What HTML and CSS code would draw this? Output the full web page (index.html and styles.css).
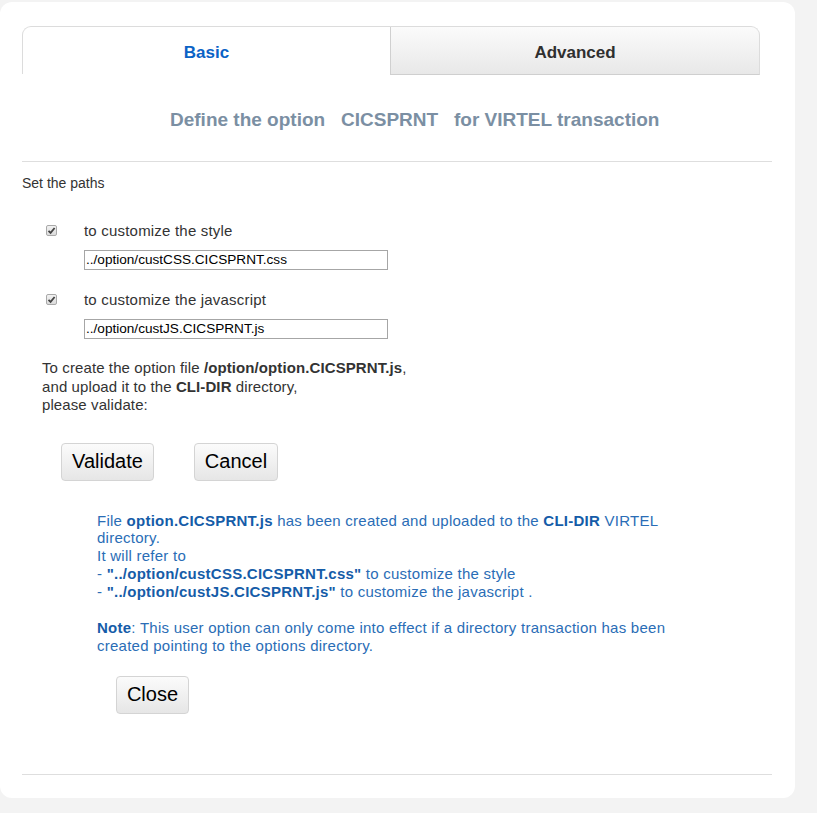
FILE: index.html
```html
<!DOCTYPE html>
<html>
<head>
<meta charset="utf-8">
<link rel="stylesheet" href="styles.css">
</head>
<body>
<div class="panel">
  <div class="tabs">
    <div class="tab tab-basic">Basic</div>
    <div class="tab tab-adv">Advanced</div>
  </div>
  <div class="title">Define the option&nbsp;&nbsp; CICSPRNT&nbsp;&nbsp; for VIRTEL transaction</div>
  <div class="rule rule-top"></div>
  <div class="paths-label">Set the paths</div>
  <div class="opt opt-first">
    <span class="check"><svg width="11" height="11" viewBox="0 0 11 11"><path d="M2.5 5.8 L4.6 7.9 L8.6 3" fill="none" stroke="#444" stroke-width="1.8"/></svg></span>
    <span class="opt-label">to customize the style</span>
  </div>
  <div class="field">../option/custCSS.CICSPRNT.css</div>
  <div class="opt opt-second">
    <span class="check"><svg width="11" height="11" viewBox="0 0 11 11"><path d="M2.5 5.8 L4.6 7.9 L8.6 3" fill="none" stroke="#444" stroke-width="1.8"/></svg></span>
    <span class="opt-label">to customize the javascript</span>
  </div>
  <div class="field">../option/custJS.CICSPRNT.js</div>
  <p class="info">To create the option file <b>/option/option.CICSPRNT.js</b>,<br>and upload it to the <b>CLI-DIR</b> directory,<br>please validate:</p>
  <div class="actions">
    <button class="btn btn-validate">Validate</button>
    <button class="btn btn-cancel">Cancel</button>
  </div>
  <div class="result">
    <p>File <b>option.CICSPRNT.js</b> has been created and uploaded to the <b>CLI-DIR</b> VIRTEL directory.<br>It will refer to<br>- <b>"../option/custCSS.CICSPRNT.css"</b> to customize the style<br>- <b>"../option/custJS.CICSPRNT.js"</b> to customize the javascript .</p>
    <p class="note"><b>Note</b>: This user option can only come into effect if a directory transaction has been created pointing to the options directory.</p>
  </div>
  <button class="btn btn-close">Close</button>
  <div class="rule rule-bottom"></div>
</div>
</body>
</html>
```

FILE: styles.css
```css
html, body {
  margin: 0;
  padding: 0;
  background: #f3f3f3;
  font-family: "Liberation Sans", Arial, sans-serif;
  color: #333;
}
.panel {
  margin-top: 2px;
  width: 795px;
  height: 796px;
  box-sizing: border-box;
  background: #fff;
  border-radius: 12px;
  padding: 24px 0 0 22px;
  display: flex;
  flex-direction: column;
}
.tabs {
  display: flex;
  width: 738px;
  height: 49px;
}
.tab {
  box-sizing: border-box;
  height: 49px;
  display: flex;
  align-items: center;
  justify-content: center;
  font-weight: bold;
  font-size: 17px;
  padding-top: 4px;
}
.tab-basic {
  width: 368px;
  color: #0b63c6;
  background: #fff;
  border-top: 1px solid #dcdcdc;
  border-left: 1px solid #dcdcdc;
  border-top-left-radius: 9px;
  height: 48px;
  padding-top: 5px;
}
.tab-adv {
  width: 370px;
  color: #2f2f2f;
  background: linear-gradient(#fbfbfb, #e8e8e8);
  border: 1px solid #dcdcdc;
  border-left-color: #d0d0d0;
  border-bottom-color: #cfcfcf;
  border-top-right-radius: 9px;
}
.title {
  margin-top: 34px;
  padding-left: 148px;
  font-size: 19px;
  line-height: 22px;
  font-weight: bold;
  color: #7b8fa3;
  white-space: pre;
}
.rule {
  width: 750px;
  height: 1px;
  background: #dedede;
}
.rule-top { margin-top: 30px; }
.paths-label {
  margin-top: 14px;
  font-size: 14px;
  line-height: 15px;
  color: #333;
}
.opt {
  display: flex;
  align-items: center;
  height: 20px;
  padding-left: 24px;
  font-size: 15px;
  color: #333;
}
.opt-first { margin-top: 29px; }
.opt-second { margin-top: 19px; }
.check {
  box-sizing: border-box;
  width: 11px;
  height: 11px;
  border: 1px solid #a9a9a9;
  border-radius: 2px;
  background: linear-gradient(#f2f2f2, #dcdcdc);
  display: flex;
  align-items: center;
  justify-content: center;
  margin-right: 27px;
}
.check svg { display: block; margin: -1px; }
.opt-label { letter-spacing: 0.2px; }
.field {
  box-sizing: border-box;
  margin-top: 10px;
  margin-left: 62px;
  width: 304px;
  height: 20px;
  border: 1px solid #a6a6a6;
  font-size: 13.6px;
  line-height: 18px;
  padding-left: 1px;
  color: #000;
}
.info {
  margin: 20px 0 0 20px;
  font-size: 15px;
  line-height: 18.5px;
  letter-spacing: 0.1px;
  color: #333;
}
.actions {
  display: flex;
  gap: 40px;
  margin-top: 28px;
  padding-left: 39px;
}
.btn {
  box-sizing: border-box;
  height: 38px;
  border: 1px solid #d4d4d4;
  border-radius: 4px;
  background: linear-gradient(#fbfbfb, #e6e6e6);
  font-family: "Liberation Sans", Arial, sans-serif;
  font-size: 20px;
  color: #000;
  padding: 0;
}
.btn-validate { width: 93px; }
.btn-cancel { width: 84px; }
.result {
  margin-top: 31px;
  margin-left: 75px;
  width: 580px;
  font-size: 15px;
  line-height: 17.9px;
  letter-spacing: 0.25px;
  color: #2a6db6;
}
.result p { margin: 0; }
.result b { color: #155ca8; }
.result .note { margin-top: 17.9px; }
.btn-close {
  margin-top: 21px;
  margin-left: 94px;
  width: 73px;
  align-self: flex-start;
}
.rule-bottom { margin-top: 60px; }
```
